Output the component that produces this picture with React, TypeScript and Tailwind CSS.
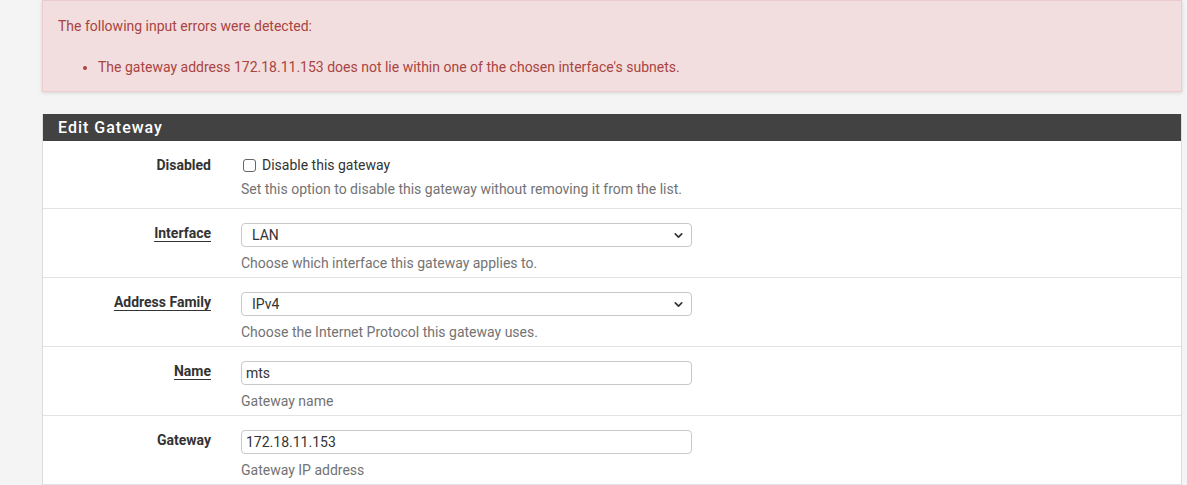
import { ChevronDown } from "lucide-react";

type Field =
  | { kind: "checkbox"; label: string; text: string; help: string }
  | { kind: "select"; label: string; value: string; help: string; link?: boolean }
  | { kind: "input"; label: string; value: string; help: string; link?: boolean };

const fields: Field[] = [
  { kind: "checkbox", label: "Disabled", text: "Disable this gateway", help: "Set this option to disable this gateway without removing it from the list." },
  { kind: "select", label: "Interface", value: "LAN", help: "Choose which interface this gateway applies to.", link: true },
  { kind: "select", label: "Address Family", value: "IPv4", help: "Choose the Internet Protocol this gateway uses.", link: true },
  { kind: "input", label: "Name", value: "mts", help: "Gateway name", link: true },
  { kind: "input", label: "Gateway", value: "172.18.11.153", help: "Gateway IP address" },
];

function Row({ field, first }: { field: Field; first: boolean }) {
  return (
    <div
      className={
        "flex items-start border-b border-[#e3e3e3] pt-[14px] " + (first ? "h-[68px]" : "h-[69px]")
      }
    >
      <div className="w-[168px] shrink-0 text-right text-[14px] leading-5 font-bold text-[#333]">
        {field.link ? (
          <span className="underline decoration-1 underline-offset-[3px]">{field.label}</span>
        ) : (
          field.label
        )}
      </div>
      <div className="ml-[30px] w-[451px]">
        {field.kind === "checkbox" ? (
          <>
            <label className="flex h-5 items-center text-[14px] text-[#333]">
              <span className="ml-[2px] mr-[6px] h-[13px] w-[13px] rounded-[3px] border border-[#666] bg-white" />
              {field.text}
            </label>
            <p className="mt-1 text-[14px] leading-5 text-[#737373]">{field.help}</p>
          </>
        ) : field.kind === "select" ? (
          <>
            <div className="flex h-[24px] items-center justify-between rounded-[4px] border border-[#c9c9c9] bg-white pl-[10px] pr-[6px] text-[14px] text-[#333]">
              <span>{field.value}</span>
              <ChevronDown size={13} strokeWidth={3} className="text-[#333]" />
            </div>
            <p className="mt-[6px] text-[14px] leading-5 text-[#737373]">{field.help}</p>
          </>
        ) : (
          <>
            <div className="flex h-[24px] items-center rounded-[4px] border border-[#c9c9c9] bg-white pl-[4px] text-[14px] text-[#333]">
              {field.value}
            </div>
            <p className="mt-[6px] text-[14px] leading-5 text-[#737373]">{field.help}</p>
          </>
        )}
      </div>
    </div>
  );
}

export default function App() {
  return (
    <div className="h-[485px] overflow-hidden bg-[#f4f4f4] font-['Roboto',sans-serif]">
      <div className="ml-[42px] w-[1140px]">
        <div className="border border-[#ebccd1] bg-[#f2dede] px-[15px] pt-[15px] pb-[14px] text-[14px] leading-5 text-[#a94442] shadow-[0_1px_4px_rgba(0,0,0,0.12)]">
          <p>The following input errors were detected:</p>
          <ul className="mt-[21px] list-disc pl-[40px]">
            <li>The gateway address 172.18.11.153 does not lie within one of the chosen interface's subnets.</li>
          </ul>
        </div>
        <div className="mt-[22px] border-x border-[#dcdcdc] bg-white">
          <div className="flex h-[27px] items-center bg-[#424242] px-[15px] text-[16px] font-medium tracking-[1px] text-white">
            Edit Gateway
          </div>
          {fields.map((f, i) => (
            <Row key={f.label} field={f} first={i === 0} />
          ))}
        </div>
      </div>
    </div>
  );
}
